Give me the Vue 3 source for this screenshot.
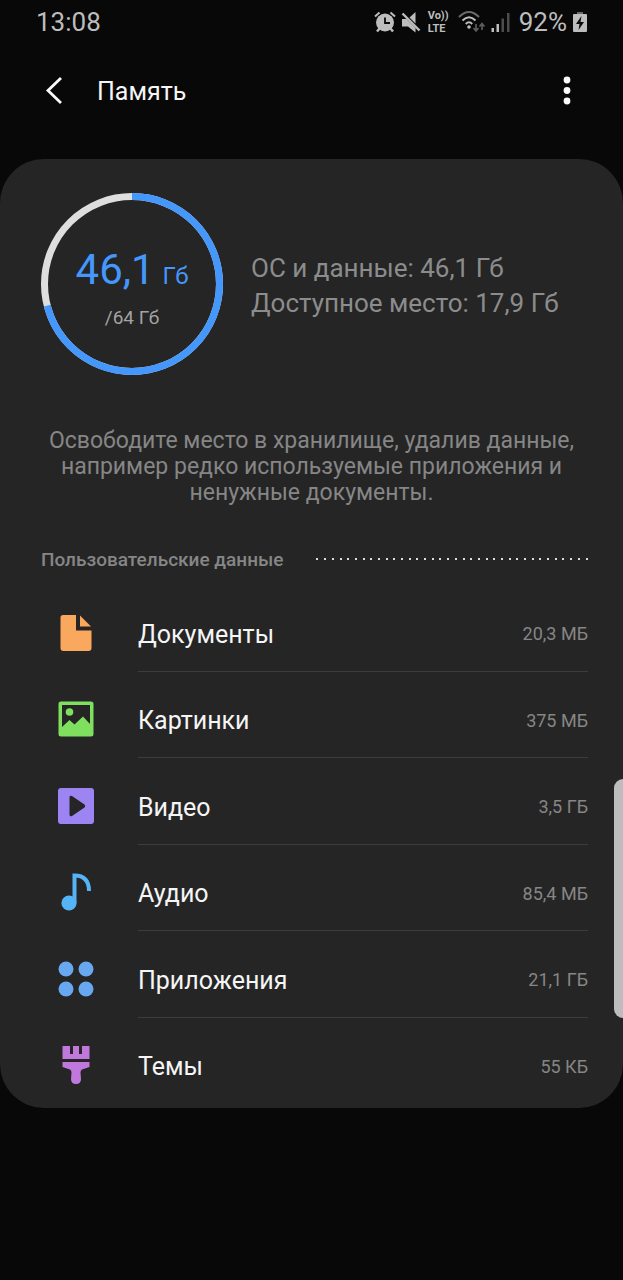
<script setup>
const used = 71
const rows = [
  { id: 'docs', label: 'Документы', size: '20,3 МБ' },
  { id: 'images', label: 'Картинки', size: '375 МБ' },
  { id: 'video', label: 'Видео', size: '3,5 ГБ' },
  { id: 'audio', label: 'Аудио', size: '85,4 МБ' },
  { id: 'apps', label: 'Приложения', size: '21,1 ГБ' },
  { id: 'themes', label: 'Темы', size: '55 КБ' },
]
</script>

<template>
  <div class="page">
    <header class="status">
      <time class="clock">13:08</time>
      <div class="indicators">
        <svg class="alarm" width="22" height="22" viewBox="0 0 22 22" aria-hidden="true">
          <g fill="none" stroke="#bdbdbd" stroke-width="2">
            <path d="M1 5.500 5.500 1.500M16.500 1.500 21 5.500" />
            <path d="M5.500 17.500 3 20.500M16.500 17.500 19 20.500" stroke-width="2.500" />
          </g>
          <circle cx="11" cy="11.500" r="9" fill="#bdbdbd" />
          <path d="M11 6.500V12h5" fill="none" stroke="#080808" stroke-width="1.800" />
        </svg>
        <svg class="mute" width="20" height="22" viewBox="0 0 20 22" aria-hidden="true">
          <path d="M1 8h4.500l9 9v4.500L7 15.500H1zM8.500 6.500 14.500 1v11.500z" fill="#bdbdbd" />
          <path d="M1.500 2.500 18.500 19.500" stroke="#bdbdbd" stroke-width="2.400" />
        </svg>
        <span class="volte"><span>Vo))</span><span>LTE</span></span>
        <svg class="wifi" width="28" height="22" viewBox="0 0 28 22" aria-hidden="true">
          <g fill="none" stroke-width="2">
            <path d="M1 6Q11 -4 21 6" stroke="#6a6a6a" />
            <path d="M4.500 9.500Q11 3 17.500 9.500M7.800 13Q11 9.500 14.200 13" stroke="#bdbdbd" />
          </g>
          <circle cx="11" cy="16" r="1.800" fill="#bdbdbd" />
          <path d="M18 13v6M15.500 17l2.500 3 2.500-3M24 19v-6M21.500 15.500l2.500-3 2.500 3" fill="none" stroke="#5c5c5c" stroke-width="1.700" />
        </svg>
        <svg class="signal" width="20" height="22" viewBox="0 0 20 22" aria-hidden="true">
          <path d="M0.500 17h2.500v4H0.500zM5.500 13h2.500v8H5.500z" fill="#bdbdbd" />
          <path d="M10.500 7.500H13V21h-2.500zM16 2h2.500v19H16z" fill="#4c4c4c" />
        </svg>
        <span class="percent">92%</span>
        <svg class="battery" width="16" height="22" viewBox="0 0 16 22" aria-hidden="true">
          <path d="M5 1h6v2H5z" fill="#6a6a6a" />
          <rect x="1" y="3" width="14" height="18" rx="1" fill="#bdbdbd" />
          <path d="M9.500 5 4 13h3.500L6.500 19 12 11H8.500z" fill="#080808" />
        </svg>
      </div>
    </header>

    <nav class="toolbar">
      <button class="icon-button" type="button" aria-label="Назад">
        <svg width="20" height="30" viewBox="0 0 20 30" aria-hidden="true">
          <path d="M17 2 4 14.500l13 12.500" fill="none" stroke="#fafafa" stroke-width="2.800" />
        </svg>
      </button>
      <h1 class="title">Память</h1>
      <button class="icon-button more" type="button" aria-label="Ещё">
        <svg width="8" height="30" viewBox="0 0 8 30" aria-hidden="true">
          <g fill="#fafafa">
            <circle cx="4" cy="4" r="3.400" />
            <circle cx="4" cy="14.500" r="3.400" />
            <circle cx="4" cy="25" r="3.400" />
          </g>
        </svg>
      </button>
    </nav>

    <main class="card">
      <section class="summary">
        <div class="gauge">
          <svg class="ring" width="182" height="182" viewBox="0 0 182 182" aria-hidden="true">
            <g fill="none" stroke-width="7" transform="rotate(-90 91 91)">
              <circle cx="91" cy="91" r="87.500" stroke="#dedede" />
              <circle cx="91" cy="91" r="87.500" stroke="#4497fb" pathLength="100" :stroke-dasharray="`${used} 100`" />
            </g>
          </svg>
          <div class="used"><span class="number">46,1</span><span class="unit">Гб</span></div>
          <div class="total">/64 Гб</div>
        </div>
        <div class="details">
          <div>ОС и данные: 46,1 Гб</div>
          <div>Доступное место: 17,9 Гб</div>
        </div>
      </section>

      <p class="hint">Освободите место в хранилище, удалив данные, например редко используемые приложения и ненужные документы.</p>

      <div class="section">
        <h2 class="section-title">Пользовательские данные</h2>
        <div class="dots" aria-hidden="true"><i v-for="n in 36" :key="n" class="dot"></i></div>
      </div>

      <ul class="list">
        <li v-for="row in rows" :key="row.id" class="item">
          <button class="row" type="button">
            <svg class="icon" width="40" height="40" viewBox="0 0 40 40" aria-hidden="true">
              <g v-if="row.id === 'docs'" fill="#faa85d">
                <path d="M7 2H20v15.500h15.500V35q0 3-3 3H7.500q-3 0-3-3V4.500Q4.500 2 7 2z" />
                <path d="M24 2.500 35 13.500H24z" />
              </g>
              <g v-else-if="row.id === 'images'" fill="#7fdf5f">
                <path fill-rule="evenodd" d="M5 2.500h30q2.500 0 2.500 2.500v30q0 2.500-2.500 2.500H5q-2.500 0-2.500-2.500V5q0-2.500 2.500-2.500zM6 6v22l7.500-7 5 4.500 8.500-8 7 7.500V6z" />
                <circle cx="13.500" cy="13" r="3.800" />
              </g>
              <path v-else-if="row.id === 'video'" fill="#9d84f3" fill-rule="evenodd" d="M5 2h30q3 0 3 3v30q0 3-3 3H5q-3 0-3-3V5q0-3 3-3zM13.500 11v18q.500 2 2.500 1L28.500 21.500q1.500-1.500 0-3L16 10q-2-1-2.500 1z" />
              <g v-else-if="row.id === 'audio'">
                <circle cx="13" cy="31" r="7.600" fill="#54b4f5" />
                <path d="M18.500 31V3.500q14.500 0 14.500 15.500" fill="none" stroke="#54b4f5" stroke-width="4" />
              </g>
              <g v-else-if="row.id === 'apps'" fill="#67a8f0">
                <circle cx="10" cy="10" r="7.500" />
                <circle cx="30" cy="10" r="7.500" />
                <circle cx="10" cy="30" r="7.500" />
                <circle cx="30" cy="30" r="7.500" />
              </g>
              <path v-else fill="#c078dd" d="M6.500 1H14v8h3V1h6v8h3V1h7.500v13h-27zM6.500 17h27v5l-7.500 2.500q-1.500 1-1.500 3l.500 6.500q0 5-5 5t-5-5l.500-6.500q0-2-1.500-3L6.500 22z" />
            </svg>
            <span class="label">{{ row.label }}</span>
            <span class="size">{{ row.size }}</span>
          </button>
        </li>
      </ul>
    </main>

    <div class="edge-handle" aria-hidden="true"></div>
  </div>
</template>

<style>
body {
  background: #080808;
}
</style>

<style scoped>
.page {
  position: relative;
  min-height: 100vh;
  background: #080808;
  color: #f5f5f5;
  font-family: Roboto, "Noto Sans", sans-serif;
}

button {
  margin: 0;
  padding: 0;
  border: 0;
  background: none;
  color: inherit;
  font: inherit;
}

.status {
  display: flex;
  align-items: center;
  justify-content: space-between;
  height: 44px;
  padding: 0 35px 0 36px;
  color: #bdbdbd;
  font-size: 26px;
  line-height: 30px;
}

.indicators {
  display: flex;
  align-items: center;
}

.mute {
  margin-left: 5px;
}

.volte {
  display: flex;
  flex-direction: column;
  width: 22px;
  margin-left: 7px;
  font-size: 11px;
  font-weight: 700;
  line-height: 13px;
}

.wifi {
  margin-left: 8px;
}

.signal {
  margin-left: 5px;
}

.percent {
  margin-left: 8px;
}

.battery {
  margin-left: 5px;
}

.toolbar {
  display: flex;
  align-items: center;
  height: 94px;
  margin-bottom: 21px;
  padding: 0 52px 0 44px;
}

.icon-button {
  display: flex;
  align-items: center;
  justify-content: center;
}

.title {
  flex: 1;
  margin: 0 0 0 33px;
  font-size: 25px;
  font-weight: 400;
  line-height: 33px;
}

.card {
  padding: 34px 35px 4px 41px;
  border-radius: 44px;
  background: #252525;
}

.summary {
  display: flex;
  align-items: center;
  gap: 28px;
}

.gauge {
  position: relative;
  display: flex;
  flex-direction: column;
  align-items: center;
  justify-content: center;
  width: 182px;
  height: 182px;
  padding-top: 8px;
  box-sizing: border-box;
}

.ring {
  position: absolute;
  inset: 0;
}

.used {
  color: #4497fb;
  line-height: 50px;
}

.number {
  font-size: 42px;
}

.unit {
  margin-left: 8px;
  font-size: 24px;
}

.total {
  color: #a3a3a3;
  font-size: 19px;
  line-height: 28px;
}

.details {
  padding-top: 3px;
  color: #8c8c8c;
  font-size: 26px;
  line-height: 35px;
}

.hint {
  margin: 53px 0 0;
  padding: 0 12px 0 6px;
  color: #868686;
  font-size: 23px;
  line-height: 26px;
  text-align: center;
}

.section {
  display: flex;
  align-items: center;
  gap: 33px;
  margin: 41px 0 12px;
}

.section-title {
  margin: 0;
  color: #868686;
  font-size: 19px;
  font-weight: 500;
  line-height: 26px;
}

.dots {
  display: flex;
  flex: 1;
  justify-content: space-between;
  margin-bottom: 2px;
}

.dot {
  width: 2px;
  height: 2px;
  background: #dedede;
}

.list {
  display: grid;
  grid-auto-rows: 1fr;
  min-height: 519px;
  margin: 0;
  padding: 0;
  list-style: none;
}

.item {
  display: flex;
}

.row {
  display: flex;
  flex: 1;
  align-items: stretch;
  text-align: left;
}

.icon {
  flex: none;
  align-self: center;
  margin: 9px 42px 0 15px;
}

.label,
.size {
  display: flex;
  align-items: center;
  padding-top: 12px;
  border-bottom: 1px solid #3c3c3c;
}

.item:last-child .label,
.item:last-child .size {
  border-bottom-color: transparent;
}

.label {
  flex: 1;
  padding-top: 13px;
  font-size: 25px;
}

.size {
  color: #868686;
  font-size: 18px;
}

.edge-handle {
  position: absolute;
  top: 779px;
  right: 0;
  width: 9px;
  height: 239px;
  border-radius: 9px 0 0 9px;
  background: #bdbdbd;
}
</style>
